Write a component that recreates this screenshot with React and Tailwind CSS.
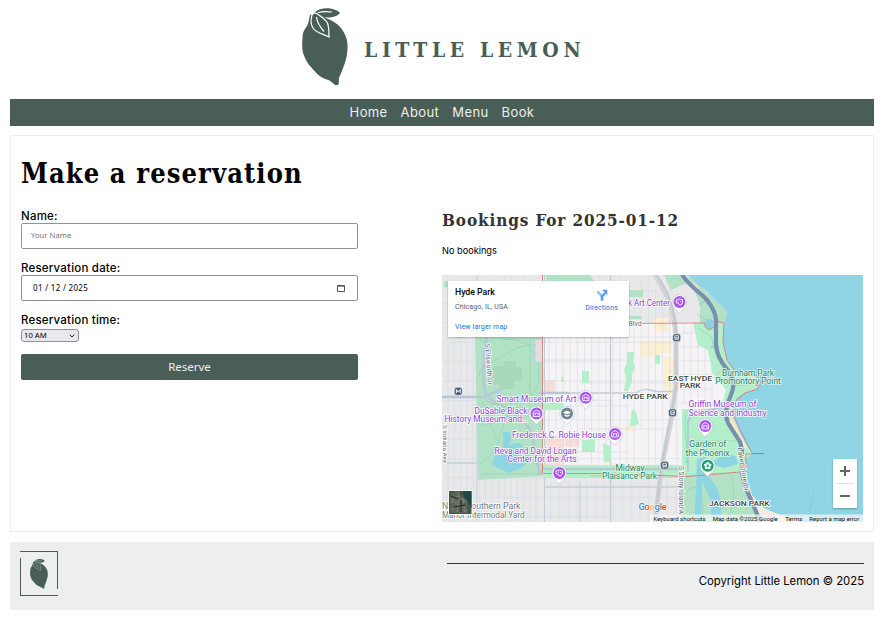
import React from "react";

const range = (a, b, s) => {
  const out = [];
  for (let v = a; v <= b; v += s) out.push(v);
  return out;
};

const COAST =
  "M687 275 L698 285 L706 291 L715 300 L727 311 L726 317 L724 323 L723 342 L727 360 L734 370 L748 372 L757 376 L761 383 L757 389 L745 393 L738 397 L734 403 L733 415 L740 433 L748 448 L752 453 L746 460 L746 470 L747 480 L752 495 L763 508 L780 515 L800 522";
const SHORE_ROAD =
  "M681 272 C685 283 700 292 707 300 C713 308 716 314 716 320 V345 C717 356 721 362 726 368 C734 377 735 386 731 395 C726 406 725 416 728 423 L740 442 C744 452 741 464 742 472 C743 482 748 494 753 504 L761 524";

function Lemon({ className, bg = "#fff" }) {
  return (
    <svg viewBox="0 0 46 78" className={className} preserveAspectRatio="none">
      <path
        fill="#495e57"
        d="M8 7 C7 10 7 13 5.500 17 C3 21 .5 24 .5 30 C0 36 0 41 1 45 C3 51 6 56 9 59 C13 64 17 68 21 70 C24 71.500 27 71.500 29.500 74 L33 77 H36 C37.500 75 36.500 73 37 70 C40 63 43 56 44.500 49 C46 42 46 34 44 29 C41 21 36 15 26 11 L20 8 L13 5Z"
      />
      <path fill="#495e57" d="M12 5 C16 1 21 0 27 .3 C32 1 36 2.500 38 5 C35 8.500 30 9.500 26 9.500 C22 9.500 19 8 16 6Z" />
      <path
        fill="none"
        stroke={bg}
        strokeWidth="1.200"
        d="M14 5 C18 8 23 11 25.500 15 C27 19 27 24 27 29 C21 26 14 25 11 20 C8 15 9 10 10 7 C10.500 5.500 12 5 14 5Z M14.500 9 C15 14 18 19 22 23.500 M16 4.500 C20 3.500 24 3.500 30 4"
      />
    </svg>
  );
}

function Label({ x, y, w, size = 8.3, fill = "#8b3fd6", halo = "#fff", weight = 400, children }) {
  return (
    <text
      x={x}
      y={y}
      textLength={w}
      lengthAdjust="spacingAndGlyphs"
      fontSize={size}
      fill={fill}
      fontWeight={weight}
      stroke={halo}
      strokeWidth="1.6"
      strokeLinejoin="round"
      paintOrder="stroke"
    >
      {children}
    </text>
  );
}

function Pin({ x, y, color = "#a855f7", kind = "museum" }) {
  return (
    <g transform={`translate(${x} ${y})`}>
      <path
        d="M0 11 C-1.500 8.500 -7.300 6 -7.300 0 A7.300 7.300 0 1 1 7.300 0 C7.300 6 1.500 8.500 0 11Z"
        fill="#fff"
        stroke="#b9b9c4"
        strokeWidth=".5"
      />
      <circle r="6" fill={color} />
      {kind === "museum" && (
        <path d="M-3.300 -1.300 L0 -3.500 L3.300 -1.300 V3 H-3.300Z M-1.600 2 V-.3 H1.600 V2" fill="none" stroke="#fff" strokeWidth=".9" />
      )}
      {kind === "art" && (
        <g>
          <path d="M-3.300 -2 Q0 -4 3 -2.300 V1 Q2 3.500 0 3 Q-1 0 -3 1Z" fill="none" stroke="#fff" strokeWidth=".9" />
          <circle cx="-.8" cy="-1" r=".6" fill="#fff" />
          <circle cx="1.300" cy="-.5" r=".6" fill="#fff" />
        </g>
      )}
      {kind === "school" && <path d="M-4 -1 L0 -3 L4 -1 L0 1Z M-2.500 .7 V2.300 Q0 4 2.500 2.300 V.7 L0 2Z" fill="#fff" />}
      {kind === "flower" && (
        <g fill="#fff">
          <circle cy="-2.400" r="1.500" />
          <circle cx="2.300" cy="-.7" r="1.500" />
          <circle cx="1.400" cy="2" r="1.500" />
          <circle cx="-1.400" cy="2" r="1.500" />
          <circle cx="-2.300" cy="-.7" r="1.500" />
          <circle r=".8" fill={color} />
        </g>
      )}
    </g>
  );
}

function Station({ x, y, metro }) {
  return (
    <g transform={`translate(${x} ${y})`}>
      <rect x="-4" y="-4" width="8" height="8" rx="2.500" fill="#435a70" stroke="#fff" strokeWidth=".6" />
      {metro ? (
        <path d="M-1.900 1.800 V-1.800 L0 .8 L1.900 -1.800 V1.800" fill="none" stroke="#fff" strokeWidth="1" />
      ) : (
        <path d="M-1.800 -2 H1.800 V1.500 H-1.800Z M-1.800 0 H1.800 M-1.500 2.600 L-.8 1.600 M1.500 2.600 L.8 1.600" fill="none" stroke="#fff" strokeWidth=".8" />
      )}
    </g>
  );
}

function CityMap() {
  return (
    <svg viewBox="442 275 421 247" className="block h-[247px] w-[421px] font-[Roboto,sans-serif]">
      <rect x="442" y="275" width="421" height="247" fill="#e8e8ea" />
      <path d="M543 323 H716 L735 380 L728 430 L682 470 V474 H543Z" fill="#f5f3f5" />

      {/* commercial blocks */}
      <g fill="#fcefd2">
        <path d="M640 341 h32 v12 h-13 v4 h-19z M664 357 h10 v34 h-10z M654 318 h14 v14 h-14z M668 372 h6 v22 h-6z" />
        <rect x="626" y="426" width="8" height="5" />
        <rect x="458" y="304" width="6" height="8" />
      </g>
      <g fill="#fadcd9">
        <rect x="544" y="380" width="11" height="12" />
        <rect x="544" y="435" width="20" height="30" />
        <rect x="565" y="433" width="14" height="14" />
      </g>

      {/* street grid */}
      <g stroke="#d3dbe2" strokeWidth=".6" fill="none">
        {range(448, 541, 6.3).map((x, i) => (
          <path key={x} d={`M${x} ${275 + (i % 3) * 3}V522`} />
        ))}
        {range(549, 680, 7.1).map((x, i) => (
          <path key={x} d={`M${x} ${i % 3 ? 275 : 290}V${i % 4 === 1 ? 430 : 465}`} />
        ))}
        {range(551, 676, 8.9).map((x) => (
          <path key={x} d={`M${x} 481V522`} />
        ))}
        {range(684, 712, 7).map((x) => (
          <path key={x} d={`M${x} 325V405`} />
        ))}
        {range(284, 520, 19.4).map((y, i) => (
          <path key={y} d={`M442 ${y}H${i % 2 ? 680 : 612}`} />
        ))}
        {range(291, 470, 23).map((y, i) => (
          <path key={y} d={`M${i % 2 ? 543 : 580} ${y}H${i % 2 ? 628 : 672}`} />
        ))}
        {range(333, 403, 14).map((y) => (
          <path key={y} d={`M681 ${y}H714`} />
        ))}
      </g>
      <g stroke="#c2cdd9" strokeWidth="1.300" fill="none">
        <path d="M442 396.500 H484 M545 393 H636 C641 389 644 389 648 389.500 L656 391.500 H674 M610.500 275 V522 M442 463 H478 M545 487 H680" />
        <path d="M477 275 V522 M544.500 275 V522 M580 481 V522" strokeWidth="1" />
      </g>

      {/* parks */}
      <path d="M475 337 H543 V476 L478 480 Z M546 275 H590 L596 283 H546Z" fill="#b1e2c6" />
      <path d="M444 281 H452 V287 H444Z M456 330 h9 v8 h-9z M629 290 h14 v7 h-14z M629 316 h12 v3 h-12z" fill="#b1e2c6" />
      <path d="M543 403 H563 V410 H543Z M543 465 H682 V478 H543Z" fill="#b2efca" />
      <path d="M627 352 h7 l-1 9 l2 6 l-3 8 v7 l-4 9 h-4 l2 -12 l-2 -9 l3 -8z M632 409 l4 3 l3 12 l-5 2 h-4z M582 371 h7 v12 h-7z M655 355 h5 v9 h-5z M561 377 h3 v5 h-3z M582 440 h13 v12 h-13z M603 443 l8 4 v15 h-7z" fill="#b2efca" />
      <path d="M682 409 H729 L750 453 L746 478 H682Z" fill="#b2efca" />
      <path d="M682 474 L745 472 L762 524 H682Z" fill="#b1e2c6" />
      <path d="M664 275 H681 L687 283 L671 290Z M687 275 L715 300 L727 311 L724 323 H700 V304Z" fill="#b1e2c6" />
      <path
        d="M693 323 H724 L724 342 L727 360 L734 370 L757 376 L761 383 L757 389 L745 393 L734 403 L733 415 L728 423 L721 409 L726 390 L712 372 L708 350 L698 345Z"
        fill="#b2efca"
      />
      <g stroke="#99ceb5" strokeWidth=".7" fill="none">
        <path d="M480 340 C500 350 482 362 479 376 M500 340 C525 336 541 350 539 378 C538 396 518 407 501 402 M484 397 C491 410 515 404 539 412 M482 402 C492 414 489 431 500 443 M480 426 L542 409 M479 464 C504 450 498 429 508 416 M530 338 V394 M483 368 C510 352 520 342 541 346 M481 474 H542" />
        <path d="M686 413 C682 432 690 446 686 463 M690 411 H726 M687 441 H735 M686 492 C703 477 704 503 702 522 M731 476 C737 495 731 507 728 522 M699 328 C707 336 714 334 713 346 M697 314 L712 323 M711 376 C722 382 730 389 757 383 M727 365 L718 374 M546 469 H680 M590 476 H627" />
      </g>
      <rect x="535.500" y="340" width="6.500" height="22" fill="#e3dcdf" />
      <path d="M492 366 h12 v-5 h12 v6 h6 v14 h-8 v8 h-14 v-4 h-9z" fill="#a8d9bd" />
      <path d="M503 432 C512 429 513 439 509 445 C516 444 522 439 522 449 C533 450 530 463 521 468 L509 473 L492 465 L495 455 L503 455Z" fill="#8ed5e3" />
      <path d="M499 418 L509 415 L516 416 L506 419Z" fill="#8ed5e3" />

      {/* washington park drives and rail corridor */}
      <g fill="none" strokeLinecap="round">
        <path d="M487 330 C486 348 481 370 485 392 C490 404 508 406 521 419 C536 431 533 452 540 474 M442 397 H484 L502 389 M543 469 H682 M541 393 H569" stroke="#b6c8d2" strokeWidth="2.600" />
        <path d="M655 275 C666 291 674 307 676 337 V386 L671 420 L662 465 L655 522" stroke="#d0d3d7" strokeWidth="5" />
        <path d="M657 275 C668 292 676 310 676 337 V386 L669 425 L660 475 L655 522" stroke="#bcc1c8" strokeWidth="1" />
        <path d="M688 471 V424 Q688 415 701 411 L726 407 M682 481 V522 M711 347 H718 M700 304 L705 301" stroke="#b8c8d6" strokeWidth="2" />
      </g>

      {/* lake */}
      <path d={`${COAST} H864 V274Z`} fill="#90d5e6" />
      <path d="M731 416 L740 434 L748 448 L744 448 L733 430 L729 421Z" fill="#fbe7c4" />
      <path d="M747 480 L752 495 L763 508 L780 515 L799 522 H763 L752 502Z" fill="#f5ecdd" />
      <path d="M691 280 L698 286 L700 292 L694 285Z" fill="#f9dfb9" />
      <path d="M697 459 L706 457 L710 463 L725 454 L736 456 L738 464 L724 468 L713 465 L708 475 L716 486 L721 500 L721 522 H712 L710 498 L702 481 L701 522 H694 L696 493Z" fill="#8ed5e3" />
      <path d="M809 512 L814 491" stroke="#86c7ca" strokeWidth=".8" />
      <path d={SHORE_ROAD} fill="none" stroke="#7890ad" strokeWidth="4.200" />
      <ellipse cx="709.500" cy="324" rx="4.500" ry="5" fill="#8bd1e2" />

      {/* neighbourhood boundary */}
      <path
        d="M542.500 275 V473.500 H602 L688 476.500 L746 471.500 V454 L764 453.500 H752 L733 415 L734 402 L745 393 L757 389 L761 383 L757 376 L734 370 L727 360 L723 342 L724 323 L718 321.500 Q714 325 713 328 C709 331 704 329 705 323 L629 323.500"
        fill="none"
        stroke="#e35d5d"
        strokeWidth=".9"
        strokeDasharray="1.600 .5"
      />

      <Station x={676.700} y={337.700} />
      <Station x={672.500} y={412.800} />
      <Station x={664.700} y={465.300} />
      <Station x={458.300} y={391.300} metro />
      <Pin x={679.500} y={302} kind="art" />
      <Pin x={585.700} y={397.700} />
      <Pin x={536.500} y={413.500} />
      <Pin x={567} y={413.500} color="#6f8594" kind="school" />
      <Pin x={615} y={434} />
      <Pin x={559.300} y={473} kind="art" />
      <Pin x={705.300} y={426} />
      <Pin x={707.700} y={465.700} color="#12a46b" kind="flower" />

      <Label x={628} y={306} w={42}>k Art Center</Label>
      <Label x={496.500} y={402} w={80}>Smart Museum of Art</Label>
      <Label x={474.500} y={413.500} w={53}>DuSable Black</Label>
      <Label x={444.500} y={422} w={83}>History Museum and…</Label>
      <Label x={512} y={438} w={94}>Frederick C. Robie House</Label>
      <Label x={494.500} y={454} w={82}>Reva and David Logan</Label>
      <Label x={507.500} y={462.300} w={69}>Center for the Arts</Label>
      <Label x={688.500} y={407.300} w={68}>Griffin Museum of</Label>
      <Label x={688.500} y={415.800} w={78}>Science and Industry</Label>
      <g>
        <Label x={615.500} y={470.500} w={29} fill="#278565" halo="#e0f7ea">Midway</Label>
        <Label x={602} y={479} w={55} fill="#278565" halo="#e0f7ea">Plaisance Park</Label>
        <Label x={689.300} y={447} w={37} fill="#278565" halo="#e0f7ea">Garden of</Label>
        <Label x={685.500} y={455.500} w={44} fill="#278565" halo="#e0f7ea">the Phoenix</Label>
        <Label x={722} y={376} w={52} fill="#278565" halo="#e0f7ea">Burnham Park</Label>
        <Label x={715.300} y={384.300} w={65.500} fill="#278565" halo="#e0f7ea">Promontory Point</Label>
      </g>
      <g>
        <Label x={668} y={380.500} w={44} size={7.4} weight={500} fill="#3c4043">EAST HYDE</Label>
        <Label x={679.700} y={388} w={21} size={7.4} weight={500} fill="#3c4043">PARK</Label>
        <Label x={622.700} y={398.500} w={45} size={7.4} weight={500} fill="#3c4043">HYDE PARK</Label>
        <Label x={709} y={506} w={60.500} size={7.4} weight={500} fill="#3c4043">JACKSON PARK</Label>
      </g>
      <Label x={628.500} y={326} w={13} size={6.800} fill="#5a6670">Blvd</Label>
      <Label x={442} y={509} w={78.500} fill="#6a7b87">North Southern Park</Label>
      <Label x={442} y={517.500} w={82.500} fill="#6a7b87">Manor Intermodal Yard</Label>
      <g transform="translate(485 344) rotate(86)">
        <Label x={0} y={0} w={41} size={6.800} fill="#5a6670">S Ellsworth Dr</Label>
      </g>
      <g transform="translate(678.500 466) rotate(90)">
        <Label x={0} y={0} w={48} size={6.800} fill="#5a6670">S Stony Island A</Label>
      </g>
      <g transform="translate(737.500 448) rotate(81)">
        <Label x={0} y={0} w={44} size={6.800} fill="#5a6670">Lake Shore Dr</Label>
      </g>
      <g transform="translate(442.500 425) rotate(90)">
        <Label x={0} y={0} w={38} size={4.500} fill="#5a6670">S Indiana Ave</Label>
      </g>

      <text x="638.500" y="509.500" textLength="28" fontSize="9.500" stroke="#fff" strokeWidth="1" paintOrder="stroke" fontWeight="500">
        <tspan fill="#4285f4">G</tspan>
        <tspan fill="#ea4335">o</tspan>
        <tspan fill="#fbbc05">o</tspan>
        <tspan fill="#4285f4">g</tspan>
        <tspan fill="#34a853">l</tspan>
        <tspan fill="#ea4335">e</tspan>
      </text>

      {/* satellite thumbnail */}
      <rect x="448" y="490" width="24.500" height="25" fill="#fff" />
      <rect x="449" y="491" width="22.500" height="23" fill="#44554a" />
      <path d="M451 493 L457 491 L461 496 L467 501 L468 513 H450Z" fill="#5d6559" />
      <path d="M463 491 H471.500 V508 L468 501 L464 497Z" fill="#1d4949" />
      <path d="M451 503 l5 -7 l5 4 l5 1 M452 510 l8 -6 l7 7 M459 492 l-2 20 M463 498 l2 15 M450 499 l7 5 l6 7" stroke="#929188" strokeWidth=".9" strokeDasharray="2 1" fill="none" />
      <path d="M451 496 l8 3 M454 507 l11 -2 M461 500 v12" stroke="#27382f" strokeWidth="1.300" fill="none" />

      <rect x="650" y="514.500" width="213" height="7.500" fill="#f5f5f5" opacity=".75" />
      <g fontSize="6" fill="#111">
        <text x="653.500" y="520.600" textLength="52">Keyboard shortcuts</text>
        <text x="712.800" y="520.600" textLength="65">Map data ©2025 Google</text>
        <text x="785.300" y="520.600" textLength="17">Terms</text>
        <text x="809.300" y="520.600" textLength="50">Report a map error</text>
      </g>
    </svg>
  );
}

function MapPanel() {
  return (
    <div className="relative h-[247px] w-[421px] overflow-hidden font-[Roboto,sans-serif]">
      <CityMap />
      <div className="absolute top-1.5 left-1.5 flex h-14 w-[181px] justify-between bg-white pr-[11px] pl-[7px] shadow-[0_1px_2px_rgba(0,0,0,0.25)]">
        <div className="flex flex-col">
          <b className="mt-[5px] text-[8.7px] leading-3 font-medium text-black">Hyde Park</b>
          <span className="mt-[4px] text-[7px] leading-[10px] tracking-[0.02em] text-[#5b5b5b]">Chicago, IL, USA</span>
          <a className="mt-[10px] text-[7px] leading-[11px] tracking-[0.02em] text-[#1a73e8]">View larger map</a>
        </div>
        <div className="flex flex-col items-center pt-2">
          <svg viewBox="0 0 12 12" className="h-3 w-3">
            <path d="M6 11.500 V7.500 L1.500 2.500" fill="none" stroke="#8dbaf5" strokeWidth="2.400" />
            <path d="M6 11.500 V7.500 L9 4.200" fill="none" stroke="#529bf0" strokeWidth="2.400" />
            <path d="M6 .8 H11.300 V6.300Z" fill="#529bf0" />
          </svg>
          <span className="mt-[2px] text-[7px] leading-[10px] tracking-[0.02em] text-[#1a73e8]">Directions</span>
        </div>
      </div>
      <div className="absolute right-1.5 bottom-3.5 flex h-[49px] w-6 flex-col items-center bg-white shadow-[0_1px_2px_rgba(0,0,0,0.3)]">
        <svg viewBox="0 0 24 49" className="h-[49px] w-6">
          <path d="M12 7 V17 M7 12 H17 M7 37 H17" stroke="#666" strokeWidth="2" />
          <path d="M3 24.500 H21" stroke="#e3e3e3" />
        </svg>
      </div>
    </div>
  );
}

export default function App() {
  return (
    <div className="h-[618px] w-[891px] overflow-hidden bg-white pl-[10px] text-black">
      <div className="w-[864px]">
        <header className="flex h-[99px] items-start pt-2 pl-[292px]">
          <Lemon className="h-[78px] w-[46px]" />
          <span className="mt-[27px] ml-[16px] font-['DejaVu_Serif_Condensed','DejaVu_Serif',serif] text-[21px] leading-[30px] font-bold tracking-[4.6px] whitespace-nowrap text-[#495e57]">
            LITTLE LEMON
          </span>
        </header>

        <nav className="flex h-[27px] items-center justify-center gap-[13px] bg-[#495e57] pt-px font-[Inter,sans-serif] text-[13px] tracking-[0.4px] text-[#edefee]">
          <a>Home</a>
          <a>About</a>
          <a>Menu</a>
          <a>Book</a>
        </nav>

        <main className="mt-[9px] flex h-[397px] flex-col border border-[#edefee] px-[10px]">
          <h1 className="mt-[18px] h-10 font-['DejaVu_Serif_Condensed','DejaVu_Serif',serif] text-[27px] leading-10 font-bold tracking-[1.1px] whitespace-nowrap">
            Make a reservation
          </h1>
          <div className="flex">
            <form className="flex w-[421px] flex-col pt-[15px] font-[Inter,sans-serif]">
              <label className="h-[14px] text-[11.5px] leading-[15px] font-medium tracking-[0.2px]">Name:</label>
              <div className="flex h-[26px] w-[337px] items-center rounded-[2px] border border-[#8f8f9d] pl-[9px] font-['Noto_Sans',sans-serif] text-[7.7px] text-[#757575]">
                Your Name
              </div>
              <label className="mt-[12px] h-[14px] text-[11.5px] leading-[15px] font-medium tracking-[0.2px]">Reservation date:</label>
              <div className="flex h-[26px] w-[337px] items-center justify-between rounded-[2px] border border-[#8f8f9d] pr-3 pl-[11px] font-['Noto_Sans',sans-serif] text-[8px] tracking-[0.3px]">
                <span>01 / 12 / 2025</span>
                <svg viewBox="0 0 8 8" className="mb-px h-2 w-2">
                  <path d="M.5 1.500 H7.500 V7.500 H.5Z" fill="none" stroke="#555" />
                  <path d="M.5 2 H7.500" stroke="#555" strokeWidth="1.300" />
                </svg>
              </div>
              <label className="mt-[12px] h-[16px] text-[11.5px] leading-[15px] font-medium tracking-[0.2px]">Reservation time:</label>
              <div className="flex h-[13px] w-[58px] items-center justify-between rounded-[3px] border border-[#8f8f9d] bg-[#e9e9ed] pr-[3px] pl-[2px] font-['Noto_Sans',sans-serif] text-[7.7px] leading-[11px]">
                <span>10 AM</span>
                <svg viewBox="0 0 6 4" className="h-1 w-1.5">
                  <path d="M.7 .7 L3 3 L5.300 .7" fill="none" stroke="#222" />
                </svg>
              </div>
              <button
                type="button"
                className="mt-3 h-[26px] w-[337px] rounded-[2px] bg-[#495e57] font-['Noto_Sans',sans-serif] text-[11.5px] leading-[26px] text-[#edefee]"
              >
                Reserve
              </button>
            </form>

            <section className="flex w-[421px] flex-col">
              <h2 className="mt-[14px] h-6 font-['DejaVu_Serif_Condensed','DejaVu_Serif',serif] text-[17px] leading-6 font-bold tracking-[0.88px] whitespace-nowrap text-[#333]">
                Bookings For 2025-01-12
              </h2>
              <p className="mt-[12px] mb-[17px] h-[14px] font-[Inter,sans-serif] text-[9.2px] leading-[14px]">No bookings</p>
              <MapPanel />
            </section>
          </div>
        </main>

        <footer className="mt-[10px] flex h-[68px] justify-between bg-[#edefee] px-[10px]">
          <div className="mt-[9px] flex h-[45px] w-[38px] items-center justify-center bg-[linear-gradient(#495e57,#495e57),linear-gradient(#495e57,#495e57),linear-gradient(#495e57,#495e57),linear-gradient(#495e57,#495e57)] bg-[size:100%_1px,100%_1px,1px_38px,1px_38px] bg-[position:0_0,0_100%,0_100%,100%_0] bg-no-repeat">
            <Lemon className="h-[30px] w-[18px]" bg="#b9c3bf" />
          </div>
          <div className="mt-[21px] w-[417px] border-t border-[#333]">
            <p className="mt-[9px] text-right font-[Inter,sans-serif] text-[11.3px] leading-4">Copyright Little Lemon © 2025</p>
          </div>
        </footer>
      </div>
    </div>
  );
}
